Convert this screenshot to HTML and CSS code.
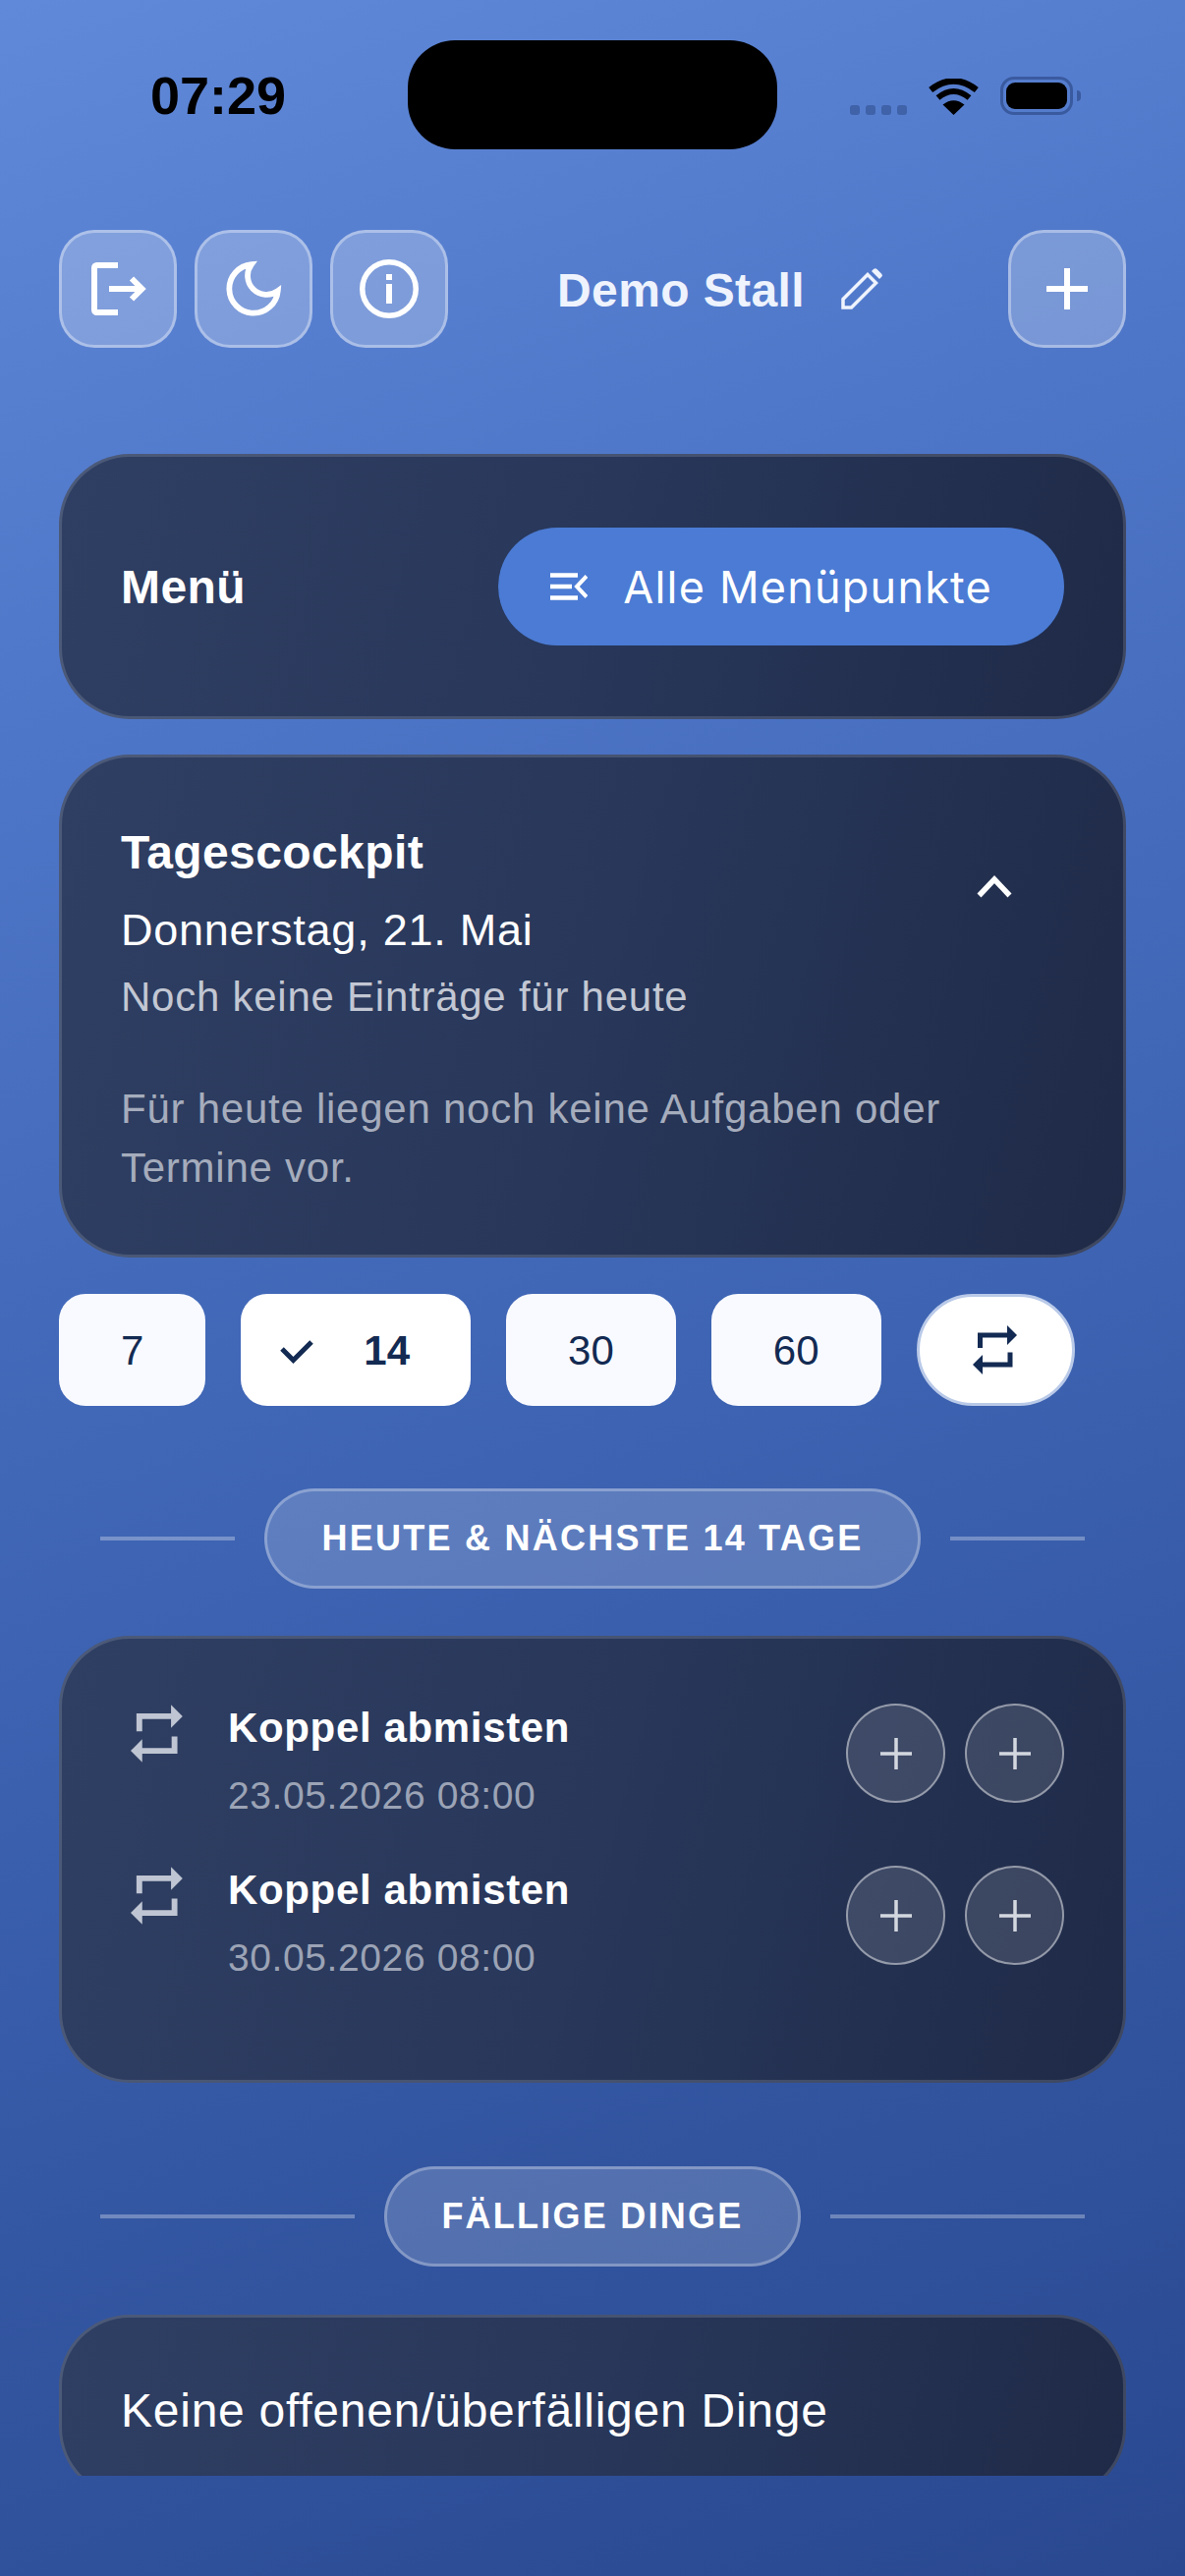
FILE: index.html
```html
<!DOCTYPE html>
<html lang="de">
<head>
    <meta charset="UTF-8">
    <meta name="viewport" content="width=device-width, initial-scale=1.0">
    <title>Demo Stall</title>
    <link rel="stylesheet" href="styles.css">
</head>
<body>
    <svg class="defs" width="0" height="0" aria-hidden="true">
        <symbol id="repeat" viewBox="0 0 46 50">
            <path d="M7.500 23V10H36" fill="none" stroke="currentColor" stroke-width="5"/>
            <path d="M35 0l10 10-10 10z" fill="currentColor"/>
            <path d="M38 27.500V40H9" fill="none" stroke="currentColor" stroke-width="5"/>
            <path d="M10 30L0 40l10 10z" fill="currentColor"/>
        </symbol>
        <symbol id="plus" viewBox="0 0 32 32">
            <path d="M16 0v32M0 16h32" fill="none" stroke="currentColor" stroke-width="3.500"/>
        </symbol>
    </svg>

    <div class="status">
        <div class="status-time">07:29</div>
        <div class="island"></div>
        <div class="status-icons">
            <div class="signal"><i></i><i></i><i></i><i></i></div>
            <svg class="wifi" viewBox="0 0 51 37">
                <path d="M25.500 37L14.500 26.500Q25.500 18 36.500 26.500Z" fill="#000"/>
                <path d="M9.500 19.500Q25.500 6.500 41.500 19.500" fill="none" stroke="#000" stroke-width="6"/>
                <path d="M2.200 11.500Q25.500 -6.500 48.800 11.500" fill="none" stroke="#000" stroke-width="6.500"/>
            </svg>
            <div class="battery"><div class="battery-level"></div></div>
            <div class="battery-nub"></div>
        </div>
    </div>

    <header class="topbar">
        <div class="topbar-group">
            <button class="glass-btn">
                <svg width="72" height="72" viewBox="0 0 72 72" fill="none" stroke="#fff" stroke-width="6">
                    <path d="M36 12H14.500a2.500 2.500 0 0 0-2.500 2.500v43a2.500 2.500 0 0 0 2.500 2.500H36"/>
                    <path d="M27 36h33M50 25.500L60.500 36 50 46.500"/>
                </svg>
            </button>
            <button class="glass-btn">
                <svg width="66" height="66" viewBox="0 0 24 24" fill="none" stroke="#fff" stroke-width="2.100">
                    <path d="M21 12.790A9 9 0 1 1 11.210 3 7 7 0 0 0 21 12.790z"/>
                </svg>
            </button>
            <button class="glass-btn">
                <svg width="60" height="60" viewBox="0 0 60 60" fill="none" stroke="#fff" stroke-width="5.500">
                    <circle cx="30" cy="30" r="27.250"/>
                    <path d="M30 15v6M30 25v20" stroke-width="6"/>
                </svg>
            </button>
        </div>
        <div class="stable-title">
            <span>Demo Stall</span>
            <svg width="42" height="42" viewBox="0 0 42 42" fill="none" stroke="#eef3fd" stroke-width="3.500">
                <path d="M2 40v-8.500L27 6.500 35.500 15 10.500 40z"/>
                <path d="M31 3l2-2a2.500 2.500 0 0 1 3.500 0l4.500 4.500a2.500 2.500 0 0 1 0 3.500l-2 2z" fill="#eef3fd" stroke="none"/>
            </svg>
        </div>
        <button class="glass-btn">
            <svg width="42" height="42" viewBox="0 0 42 42" fill="none" stroke="#fff" stroke-width="6">
                <path d="M21 0v42M0 21h42"/>
            </svg>
        </button>
    </header>

    <main class="content">
        <section class="card menu-card">
            <h2 class="card-title">Menü</h2>
            <button class="menu-btn">
                <svg width="38" height="28" viewBox="0 0 38 28" fill="none" stroke="#fff">
                    <path d="M0 2.500h28M0 14h22M0 25.500h28" stroke-width="4.500"/>
                    <path d="M37 3.500L27 14l10 10.500" stroke-width="4"/>
                </svg>
                <span>Alle Menüpunkte</span>
            </button>
        </section>

        <section class="card cockpit-card">
            <div class="cockpit-head">
                <div>
                    <h2 class="card-title">Tagescockpit</h2>
                    <p class="cockpit-date">Donnerstag, 21. Mai</p>
                    <p class="cockpit-sub">Noch keine Einträge für heute</p>
                </div>
                <svg class="chevron" width="36" height="24" viewBox="0 0 36 24" fill="none" stroke="#fff" stroke-width="5.500">
                    <path d="M2.500 21.500L18 5l15.500 16.500"/>
                </svg>
            </div>
            <p class="cockpit-note">Für heute liegen noch keine Aufgaben oder Termine vor.</p>
        </section>

        <div class="chips">
            <button class="chip">7</button>
            <button class="chip chip-active">
                <svg width="34" height="25" viewBox="0 0 34 25" fill="none" stroke="#132a52" stroke-width="5">
                    <path d="M2 10l11.500 11.500L32 3"/>
                </svg>
                <span>14</span>
            </button>
            <button class="chip">30</button>
            <button class="chip">60</button>
            <button class="chip chip-repeat"><svg class="repeat-icon"><use href="#repeat"/></svg></button>
        </div>

        <div class="divider">
            <span class="divider-line"></span>
            <span class="divider-label">HEUTE &amp; NÄCHSTE 14 TAGE</span>
            <span class="divider-line"></span>
        </div>

        <section class="card list-card">
            <div class="task">
                <svg class="repeat-icon task-icon"><use href="#repeat"/></svg>
                <div class="task-text">
                    <div class="task-name">Koppel abmisten</div>
                    <div class="task-date">23.05.2026 08:00</div>
                </div>
                <button class="round-btn"><svg><use href="#plus"/></svg></button>
                <button class="round-btn"><svg><use href="#plus"/></svg></button>
            </div>
            <div class="task">
                <svg class="repeat-icon task-icon"><use href="#repeat"/></svg>
                <div class="task-text">
                    <div class="task-name">Koppel abmisten</div>
                    <div class="task-date">30.05.2026 08:00</div>
                </div>
                <button class="round-btn"><svg><use href="#plus"/></svg></button>
                <button class="round-btn"><svg><use href="#plus"/></svg></button>
            </div>
        </section>

        <div class="divider divider-due">
            <span class="divider-line"></span>
            <span class="divider-label">FÄLLIGE DINGE</span>
            <span class="divider-line"></span>
        </div>

        <section class="card due-card">Keine offenen/überfälligen Dinge</section>
    </main>
</body>
</html>
```

FILE: styles.css
```css
* {
    box-sizing: border-box;
}
html, body {
    margin: 0;
    padding: 0;
}
body {
    width: 1206px;
    height: 2622px;
    overflow: hidden;
    font-family: "Liberation Sans", Arial, sans-serif;
    color: #fff;
    background: linear-gradient(160deg, #6189d9 0%, #4e76c8 25%, #3d63b2 55%, #294890 100%);
}
button {
    font-family: inherit;
    padding: 0;
    border: none;
    cursor: pointer;
}
h2, p {
    margin: 0;
}
.defs {
    position: absolute;
}

/* status bar */
.status {
    display: flex;
    height: 152px;
    padding-top: 41px;
}
.status-time {
    width: 415px;
    padding-left: 153px;
    padding-top: 26px;
    font-size: 54px;
    line-height: 60px;
    font-weight: 700;
    color: #000;
}
.island {
    width: 376px;
    height: 111px;
    border-radius: 48px;
    background: #000;
}
.status-icons {
    display: flex;
    align-items: flex-end;
    height: 76px;
    padding-left: 74px;
}
.signal {
    display: flex;
    gap: 6px;
}
.signal i {
    width: 10px;
    height: 10px;
    border-radius: 3px;
    background: #3f62a8;
}
.wifi {
    width: 51px;
    height: 37px;
    margin-left: 22px;
}
.battery {
    width: 74px;
    height: 39px;
    margin-left: 22px;
    padding: 3px;
    border: 3px solid #3a5a9f;
    border-radius: 14px;
}
.battery-level {
    width: 100%;
    height: 100%;
    border-radius: 9px;
    background: #000;
}
.battery-nub {
    width: 4px;
    height: 11px;
    margin-left: 4px;
    margin-bottom: 14px;
    border-radius: 0 4px 4px 0;
    background: #3a5a9f;
}

/* top bar */
.topbar {
    display: flex;
    align-items: center;
    margin-top: 82px;
    padding: 0 60px;
}
.topbar-group {
    display: flex;
    gap: 18px;
}
.glass-btn {
    display: flex;
    align-items: center;
    justify-content: center;
    width: 120px;
    height: 120px;
    border: 3px solid rgba(255, 255, 255, 0.35);
    border-radius: 36px;
    background: rgba(255, 255, 255, 0.24);
}
.stable-title {
    flex: 1;
    display: flex;
    align-items: center;
    justify-content: center;
    gap: 37px;
    padding-right: 17px;
    font-size: 48px;
    font-weight: 700;
    letter-spacing: 0.400px;
    color: #eef3fd;
}
.stable-title span {
    padding-top: 2px;
}

/* cards */
.content {
    height: 2058px;
    margin-top: 108px;
    padding: 0 60px;
    overflow: hidden;
}
.card {
    border: 3px solid rgba(255, 255, 255, 0.14);
    border-radius: 72px;
    background: linear-gradient(105deg, #2f3f63 0%, #28375a 50%, #1f2a47 100%);
    background-origin: border-box;
}
.card-title {
    font-size: 48px;
    line-height: 60px;
    font-weight: 700;
    letter-spacing: 0.400px;
}
.menu-card {
    display: flex;
    align-items: center;
    justify-content: space-between;
    height: 270px;
    padding: 0 60px;
}
.menu-card .card-title {
    padding-top: 2px;
}
.menu-btn {
    display: flex;
    align-items: center;
    gap: 36px;
    height: 120px;
    padding: 0 73px 0 53px;
    border-radius: 60px;
    background: #4b7bd4;
    color: #fff;
    font-family: Inter, sans-serif;
    font-size: 45px;
    letter-spacing: 1.200px;
}
.cockpit-card {
    margin-top: 36px;
    padding: 67px 60px 58px;
}
.cockpit-head {
    display: flex;
    justify-content: space-between;
    align-items: flex-start;
}
.chevron {
    margin: 52px 53px 0 0;
}
.cockpit-date {
    margin-top: 19px;
    font-size: 45px;
    line-height: 60px;
    letter-spacing: 0.750px;
}
.cockpit-sub {
    margin-top: 14px;
    font-size: 42px;
    line-height: 48px;
    letter-spacing: 0.750px;
    color: #c2c7d3;
}
.cockpit-note {
    margin-top: 60px;
    font-size: 42px;
    line-height: 60px;
    letter-spacing: 0.750px;
    color: #a5acbc;
}

/* day chips */
.chips {
    display: flex;
    gap: 36px;
    margin-top: 37px;
}
.chip {
    height: 114px;
    padding: 2px 63px 0;
    border-radius: 27px;
    background: #f9faff;
    color: #132a52;
    font-size: 42px;
}
.chip-active {
    display: flex;
    align-items: center;
    gap: 51px;
    padding: 2px 62px 0 40px;
    background: #fff;
    font-weight: 700;
}
.chip-repeat {
    display: flex;
    align-items: center;
    justify-content: center;
    width: 161px;
    padding: 0;
    border: 3px solid #b9c9e8;
    border-radius: 57px;
    background: #fff;
}
.repeat-icon {
    width: 46px;
    height: 50px;
}

/* section dividers */
.divider {
    display: flex;
    align-items: center;
    gap: 30px;
    width: 1002px;
    margin: 84px 0 0 42px;
}
.divider-due {
    margin-top: 85px;
}
.divider-line {
    flex: 1;
    height: 4px;
    background: rgba(255, 255, 255, 0.3);
}
.divider-label {
    display: flex;
    align-items: center;
    height: 102px;
    padding: 0 55px;
    border: 3px solid rgba(255, 255, 255, 0.28);
    border-radius: 51px;
    background: rgba(255, 255, 255, 0.17);
    font-size: 36px;
    font-weight: 700;
    letter-spacing: 2.250px;
}

/* task list */
.list-card {
    margin-top: 48px;
    height: 455px;
    padding: 66px 60px 0;
}
.task {
    display: flex;
    align-items: flex-start;
    gap: 20px;
    height: 165px;
}
.task-icon {
    width: 54px;
    height: 59px;
    margin-left: 10px;
    margin-top: 1px;
    color: #bfc5d2;
}
.task-text {
    flex: 1;
    margin-left: 25px;
    padding-top: 1px;
}
.task-name {
    font-size: 42px;
    line-height: 48px;
    font-weight: 700;
    letter-spacing: 0.650px;
}
.task-date {
    margin-top: 21px;
    font-size: 39px;
    line-height: 48px;
    letter-spacing: 0.600px;
    color: #9ba3b5;
}
.round-btn {
    display: flex;
    align-items: center;
    justify-content: center;
    width: 101px;
    height: 101px;
    border: 2px solid rgba(255, 255, 255, 0.45);
    border-radius: 50%;
    background: rgba(255, 255, 255, 0.12);
    color: #d3d7df;
}
.round-btn svg {
    width: 32px;
    height: 32px;
}
.due-card {
    margin-top: 49px;
    padding: 65px 60px 56px;
    font-size: 48px;
    line-height: 60px;
    letter-spacing: 0.750px;
}
```
